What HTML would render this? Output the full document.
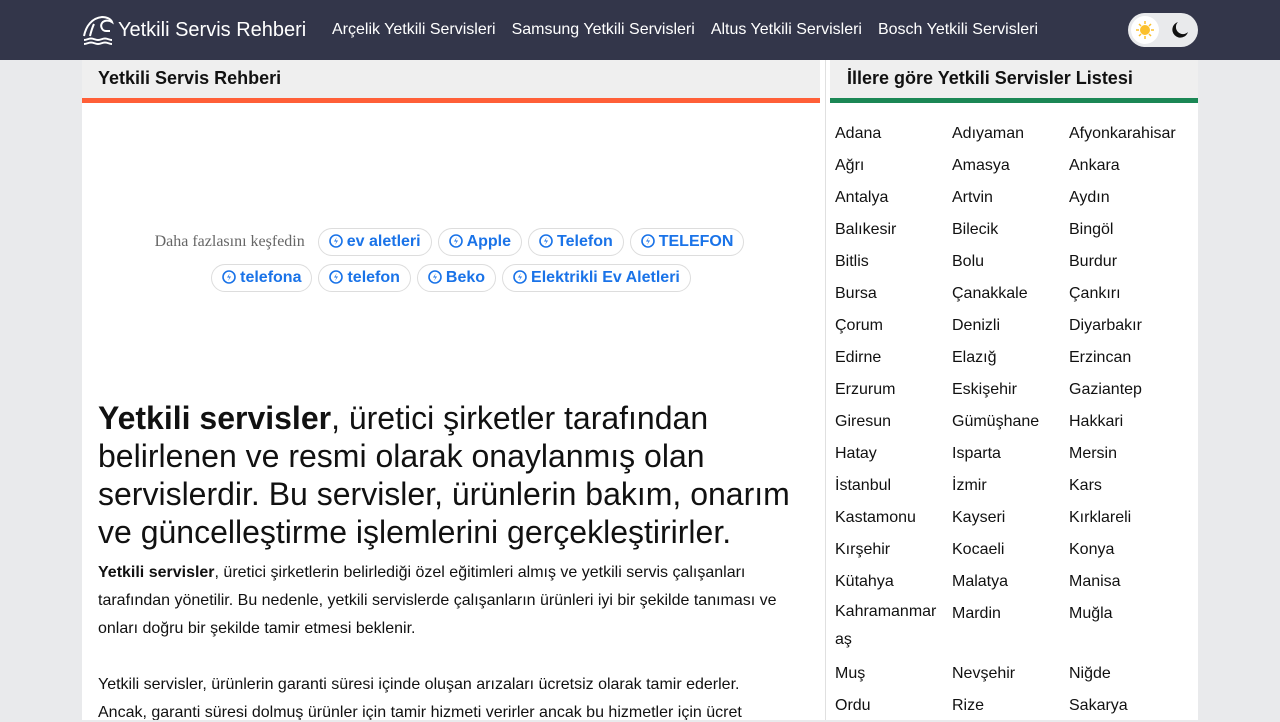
<!DOCTYPE html>
<html><head><meta charset="utf-8"><style>
*{box-sizing:border-box;margin:0;padding:0}
body{width:1280px;height:720px;overflow:hidden;background:#e9eaec;font-family:"Liberation Sans",sans-serif;color:#111}
.hdr{height:60px;background:#33364a;position:relative;color:#fff}
.logo{position:absolute;left:82px;top:14px;display:flex;align-items:center;font-size:20px}
.logo svg{margin-right:4px}
.nav{position:absolute;left:332px;top:21px;font-size:16px;display:flex;gap:16px}
.tog{position:absolute;left:1128px;top:13px;width:70px;height:34px;border-radius:17px;background:#e9eaec}
.tog .k{position:absolute;left:3px;top:3px;width:28px;height:28px;border-radius:50%;background:#fff}
.main{position:absolute;left:82px;top:60px;width:738px;height:660px;background:#fff;overflow:hidden}
.side{position:absolute;left:830px;top:60px;width:368px;height:660px;background:#fff}
.gap{position:absolute;left:820px;top:60px;width:10px;height:660px;background:#fff}
.gap div{position:absolute;left:5px;top:0;width:1px;height:660px;background:#e0e0e0}
.ttl{height:43px;background:#efefef;border-bottom:5px solid #ff5f38;font-size:18px;font-weight:bold;padding:8px 16px}
.side .ttl{border-bottom-color:#1b8755;padding-left:17px}
.tags{position:absolute;top:164px;left:0;width:738px;text-align:center;line-height:36px}
.tags span.l{font-family:"Liberation Serif",serif;color:#666;font-size:16px;margin-right:10px}
.tag{display:inline-block;border:1px solid #ddd;border-radius:14px;height:28px;line-height:26px;padding:0 10px;color:#1a73e8;font-size:16px;font-weight:bold;margin:0 3px;vertical-align:middle}
.tag svg{vertical-align:-2px;margin-right:4px}
h1{position:absolute;left:16px;top:339px;width:710px;font-size:32px;font-weight:normal;line-height:38px}
.p{position:absolute;left:16px;top:499px;width:700px;font-size:16px;line-height:28px}
.grid{position:absolute;left:5px;top:58px;display:grid;grid-template-columns:117px 117px 117px;font-size:16px;line-height:32px}
</style></head><body>
<div class="hdr">
<div class="logo"><svg width="32" height="32" viewBox="0 0 32 32" fill="none" stroke="#fff" stroke-width="2"><path d="M2 22C4 12 10 4 20 3c5 0 9 2 10 5-3-2-8-2-10 1-2 3 0 8 4 8h4"/><path d="M12 10c-2 4-3 8-4 12"/><path d="M2 26c3 0 4-1.5 7-1.5s4 1.5 7 1.5 4-1.5 7-1.5 4 1.5 7 1.5"/><path d="M2 30c3 0 4-1.5 7-1.5s4 1.5 7 1.5 4-1.5 7-1.5 4 1.5 7 1.5"/></svg>Yetkili Servis Rehberi</div>
<div class="nav"><span>Arçelik Yetkili Servisleri</span><span>Samsung Yetkili Servisleri</span><span>Altus Yetkili Servisleri</span><span>Bosch Yetkili Servisleri</span></div>
<div class="tog"><div class="k"><svg width="28" height="28" viewBox="0 0 28 28"><circle cx="14" cy="14" r="5" fill="#fbc02d"/><g stroke="#fbc02d" stroke-width="1.5"><path d="M14 5v3M14 20v3M5 14h3M20 14h3M8 8l2 2M18 18l2 2M8 20l2-2M18 10l2-2"/></g></svg></div>
<svg style="position:absolute;left:43px;top:8px" width="18" height="18" viewBox="0 0 18 18"><path d="M7 1a8 8 0 1 0 10 10A7 7 0 0 1 7 1z" fill="#111"/></svg></div>
</div>
<div class="main">
<div class="ttl">Yetkili Servis Rehberi</div>
<div class="tags"><span class="l">Daha fazlasını keşfedin</span><span class="tag"><svg width="14" height="14" viewBox="0 0 14 14"><circle cx="7" cy="7" r="6" fill="none" stroke="#1a73e8" stroke-width="1.6"/><path d="M8 3L5 7.5h2.5L6 11l3-4.5H6.5z" fill="#1a73e8"/></svg>ev aletleri</span><span class="tag"><svg width="14" height="14" viewBox="0 0 14 14"><circle cx="7" cy="7" r="6" fill="none" stroke="#1a73e8" stroke-width="1.6"/><path d="M8 3L5 7.5h2.5L6 11l3-4.5H6.5z" fill="#1a73e8"/></svg>Apple</span><span class="tag"><svg width="14" height="14" viewBox="0 0 14 14"><circle cx="7" cy="7" r="6" fill="none" stroke="#1a73e8" stroke-width="1.6"/><path d="M8 3L5 7.5h2.5L6 11l3-4.5H6.5z" fill="#1a73e8"/></svg>Telefon</span><span class="tag"><svg width="14" height="14" viewBox="0 0 14 14"><circle cx="7" cy="7" r="6" fill="none" stroke="#1a73e8" stroke-width="1.6"/><path d="M8 3L5 7.5h2.5L6 11l3-4.5H6.5z" fill="#1a73e8"/></svg>TELEFON</span><br><span class="tag"><svg width="14" height="14" viewBox="0 0 14 14"><circle cx="7" cy="7" r="6" fill="none" stroke="#1a73e8" stroke-width="1.6"/><path d="M8 3L5 7.5h2.5L6 11l3-4.5H6.5z" fill="#1a73e8"/></svg>telefona</span><span class="tag"><svg width="14" height="14" viewBox="0 0 14 14"><circle cx="7" cy="7" r="6" fill="none" stroke="#1a73e8" stroke-width="1.6"/><path d="M8 3L5 7.5h2.5L6 11l3-4.5H6.5z" fill="#1a73e8"/></svg>telefon</span><span class="tag"><svg width="14" height="14" viewBox="0 0 14 14"><circle cx="7" cy="7" r="6" fill="none" stroke="#1a73e8" stroke-width="1.6"/><path d="M8 3L5 7.5h2.5L6 11l3-4.5H6.5z" fill="#1a73e8"/></svg>Beko</span><span class="tag"><svg width="14" height="14" viewBox="0 0 14 14"><circle cx="7" cy="7" r="6" fill="none" stroke="#1a73e8" stroke-width="1.6"/><path d="M8 3L5 7.5h2.5L6 11l3-4.5H6.5z" fill="#1a73e8"/></svg>Elektrikli Ev Aletleri</span></div>
<h1><b>Yetkili servisler</b>, üretici şirketler tarafından belirlenen ve resmi olarak onaylanmış olan servislerdir. Bu servisler, ürünlerin bakım, onarım ve güncelleştirme işlemlerini gerçekleştirirler.</h1>
<div class="p"><b>Yetkili servisler</b>, üretici şirketlerin belirlediği özel eğitimleri almış ve yetkili servis çalışanları tarafından yönetilir. Bu nedenle, yetkili servislerde çalışanların ürünleri iyi bir şekilde tanıması ve onları doğru bir şekilde tamir etmesi beklenir.<br><br>Yetkili servisler, ürünlerin garanti süresi içinde oluşan arızaları ücretsiz olarak tamir ederler.<br>Ancak, garanti süresi dolmuş ürünler için tamir hizmeti verirler ancak bu hizmetler için ücret</div>
</div>
<div class="gap"><div></div></div>
<div class="side">
<div class="ttl">İllere göre Yetkili Servisler Listesi</div>
<div class="grid">
<div>Adana</div><div>Adıyaman</div><div>Afyonkarahisar</div>
<div>Ağrı</div><div>Amasya</div><div>Ankara</div>
<div>Antalya</div><div>Artvin</div><div>Aydın</div>
<div>Balıkesir</div><div>Bilecik</div><div>Bingöl</div>
<div>Bitlis</div><div>Bolu</div><div>Burdur</div>
<div>Bursa</div><div>Çanakkale</div><div>Çankırı</div>
<div>Çorum</div><div>Denizli</div><div>Diyarbakır</div>
<div>Edirne</div><div>Elazığ</div><div>Erzincan</div>
<div>Erzurum</div><div>Eskişehir</div><div>Gaziantep</div>
<div>Giresun</div><div>Gümüşhane</div><div>Hakkari</div>
<div>Hatay</div><div>Isparta</div><div>Mersin</div>
<div>İstanbul</div><div>İzmir</div><div>Kars</div>
<div>Kastamonu</div><div>Kayseri</div><div>Kırklareli</div>
<div>Kırşehir</div><div>Kocaeli</div><div>Konya</div>
<div>Kütahya</div><div>Malatya</div><div>Manisa</div>
<div style="line-height:28px;padding:0 0 4px">Kahramanmar<br>aş</div><div>Mardin</div><div>Muğla</div>
<div>Muş</div><div>Nevşehir</div><div>Niğde</div>
<div>Ordu</div><div>Rize</div><div>Sakarya</div>
</div></div>
</body></html>
